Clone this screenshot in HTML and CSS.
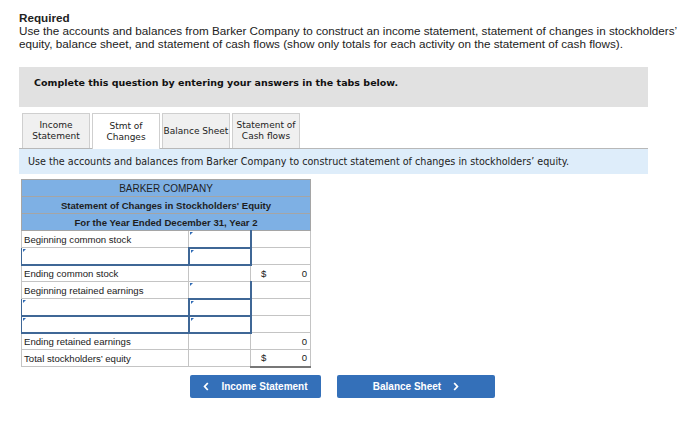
FILE: index.html
```html
<!DOCTYPE html>
<html>
<head>
<meta charset="utf-8">
<link rel="stylesheet" href="styles.css">
</head>
<body>
<div class="page">
  <div class="req">
    <div class="req-title">Required</div>
    <div class="req-text">Use the accounts and balances from Barker Company to construct an income statement, statement of changes in stockholders’ equity, balance sheet, and statement of cash flows (show only totals for each activity on the statement of cash flows).</div>
  </div>
  <div class="instr">Complete this question by entering your answers in the tabs below.</div>
  <div class="tabs">
    <div class="tab">Income<br>Statement</div>
    <div class="tab active">Stmt of<br>Changes</div>
    <div class="tab">Balance Sheet</div>
    <div class="tab">Statement of<br>Cash flows</div>
  </div>
  <div class="info">Use the accounts and balances from Barker Company to construct statement of changes in stockholders’ equity.</div>
  <table class="stmt">
    <tr class="hd"><td colspan="3">BARKER COMPANY</td></tr>
    <tr class="hd bold"><td colspan="3">Statement of Changes in Stockholders' Equity</td></tr>
    <tr class="hd bold"><td colspan="3">For the Year Ended December 31, Year 2</td></tr>
    <tr><td class="lbl">Beginning common stock</td><td class="inp"><span class="flag"></span></td><td></td></tr>
    <tr><td class="lbl inp"><span class="flag"></span></td><td class="inp"><span class="flag"></span></td><td></td></tr>
    <tr><td class="lbl">Ending common stock</td><td></td><td class="num"><span class="cur">$</span>0</td></tr>
    <tr><td class="lbl">Beginning retained earnings</td><td class="inp"><span class="flag"></span></td><td></td></tr>
    <tr><td class="lbl inp"><span class="flag"></span></td><td class="inp"><span class="flag"></span></td><td></td></tr>
    <tr><td class="lbl inp"><span class="flag"></span></td><td class="inp"><span class="flag"></span></td><td></td></tr>
    <tr><td class="lbl">Ending retained earnings</td><td></td><td class="num">0</td></tr>
    <tr class="last"><td class="lbl">Total stockholders’ equity</td><td></td><td class="num total"><span class="cur">$</span>0</td></tr>
  </table>
  <div class="nav">
    <button class="btn prev"><svg class="chev" width="6" height="9" viewBox="0 0 6 9"><path d="M4.8 1 L1.6 4.5 L4.8 8" fill="none" stroke="#fff" stroke-width="1.8"/></svg>Income Statement</button>
    <button class="btn next">Balance Sheet<svg class="chev" width="6" height="9" viewBox="0 0 6 9"><path d="M1.2 1 L4.4 4.5 L1.2 8" fill="none" stroke="#fff" stroke-width="1.8"/></svg></button>
  </div>
</div>
</body>
</html>
```
FILE: styles.css
```css
* { box-sizing: border-box; }
html, body { margin: 0; padding: 0; background: #fff; }
.page { padding: 11px 0 0 19px; width: 692px; }
.req { font-family: "Liberation Sans", Arial, sans-serif; font-size: 11.7px; line-height: 13px; color: #222; }
.req-title { font-weight: bold; }
.req-text { width: 665px; }
.instr {
  margin-top: 17px; width: 629px; height: 40px;
  background: #e1e1e1;
  font-family: "DejaVu Sans", Verdana, sans-serif; font-size: 9.5px; font-weight: bold;
  color: #111; padding: 10px 0 0 15px;
}
.tabs { display: flex; gap: 2px; margin-top: 6px; padding-left: 3px; height: 35px; }
.tab {
  width: 68px; height: 35px; white-space: nowrap; padding: 0;
  background: #f0f0f0; border: 1px solid #cfcfcf; border-bottom: none;
  display: flex; align-items: center; justify-content: center; text-align: center;
  font-family: "DejaVu Sans", Verdana, sans-serif; font-size: 9px; line-height: 11px; color: #222;
}
.tab.active { background: #fff; height: 36px; margin-bottom: -1px; position: relative; z-index: 1; }
.info {
  width: 629px; height: 26px; background: #deedfa; border-top: 1px solid #b8b8b8;
  font-family: "DejaVu Sans", Verdana, sans-serif; font-size: 9.6px; color: #222;
  padding: 7px 0 0 9px;
}
.stmt {
  margin: 5px 0 0 2px; border-collapse: collapse; width: 290px;
  font-family: "Liberation Sans", Arial, sans-serif; font-size: 9.6px; color: #1a1a1a;
  border: 1px solid #a9a9a9;
}
.stmt td { height: 17px; padding: 0 2px; border: 1px solid #c4c4c4; }
.stmt td:nth-child(1) { width: 167px; }
.stmt td:nth-child(2) { width: 62px; }
.stmt tr.hd td { background: #7eb0e4; text-align: center; border-color: #a5a5a5; color: #1e1e1e; }
.stmt tr.hd:first-child td { font-size: 10px; }
.stmt tr.hd.bold td { font-weight: bold; }
.stmt td.inp { border: 1px solid #3f6796; border-width: 1px 2px 2px 1px; position: relative; }
.flag {
  position: absolute; left: 1px; top: 1px; width: 0; height: 0;
  border-top: 3px solid #2f6bb5; border-right: 3px solid transparent;
}
.stmt td.num { text-align: right; padding-right: 3px; }
.cur { float: left; padding-left: 8px; }
.stmt td.total { border-bottom: 2px solid #777; }
.nav { display: flex; gap: 16px; margin: 7px 0 0 171px; }
.btn {
  height: 23px; border: none; border-radius: 2px;
  background: #3470b9; color: #fff;
  font-family: "Liberation Sans", Arial, sans-serif; font-size: 10px; font-weight: bold;
  padding: 0; display: flex; align-items: center; justify-content: center;
}
.btn.prev { width: 131px; }
.btn.next { width: 158px; }
.prev .chev { margin-right: 12px; }
.next .chev { margin-left: 12px; }
```
